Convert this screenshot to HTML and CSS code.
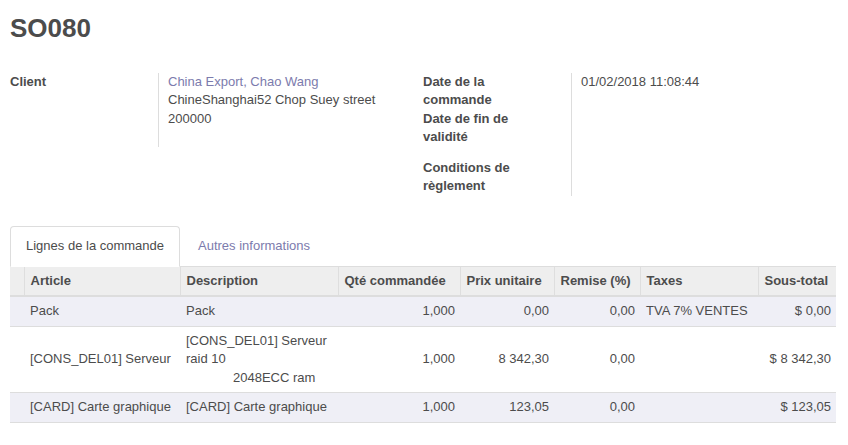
FILE: index.html
```html
<!DOCTYPE html>
<html lang="fr">
<head>
<meta charset="utf-8">
<title>SO080</title>
<link rel="stylesheet" href="styles.css">
</head>
<body>
<div class="sheet">
  <h1 class="title">SO080</h1>
  <div class="groups">
    <div class="group">
      <div class="row">
        <div class="label"><span>Client</span></div>
        <div class="value client">
          <a class="link" href="#">China Export, Chao Wang</a>
          <div>ChineShanghai52 Chop Suey street</div>
          <div>200000</div>
          <div>&nbsp;</div>
        </div>
      </div>
    </div>
    <div class="group">
      <div class="row">
        <div class="label"><span>Date de la commande</span></div>
        <div class="value">01/02/2018 11:08:44</div>
      </div>
      <div class="row">
        <div class="label"><span>Date de fin de validité</span></div>
        <div class="value"></div>
      </div>
      <div class="row spaced">
        <div class="label"><span>Conditions de règlement</span></div>
        <div class="value"></div>
      </div>
    </div>
  </div>

  <ul class="tabs">
    <li class="tab active"><a href="#">Lignes de la commande</a></li>
    <li class="tab"><a href="#">Autres informations</a></li>
  </ul>

  <table class="lines">
    <colgroup>
      <col class="c-handle"><col class="c-article"><col class="c-desc"><col class="c-qty"><col class="c-price"><col class="c-disc"><col class="c-tax"><col class="c-total">
    </colgroup>
    <thead>
      <tr>
        <th></th>
        <th>Article</th>
        <th>Description</th>
        <th>Qté commandée</th>
        <th>Prix unitaire</th>
        <th>Remise (%)</th>
        <th>Taxes</th>
        <th>Sous-total</th>
      </tr>
    </thead>
    <tbody>
      <tr class="odd">
        <td></td>
        <td>Pack</td>
        <td>Pack</td>
        <td class="num">1,000</td>
        <td class="num">0,00</td>
        <td class="num">0,00</td>
        <td>TVA 7% VENTES</td>
        <td class="num">$ 0,00</td>
      </tr>
      <tr>
        <td></td>
        <td>[CONS_DEL01] Serveur</td>
        <td class="pre">[CONS_DEL01] Serveur raid 10
             2048ECC ram</td>
        <td class="num">1,000</td>
        <td class="num">8 342,30</td>
        <td class="num">0,00</td>
        <td></td>
        <td class="num">$ 8 342,30</td>
      </tr>
      <tr class="odd">
        <td></td>
        <td>[CARD] Carte graphique</td>
        <td>[CARD] Carte graphique</td>
        <td class="num">1,000</td>
        <td class="num">123,05</td>
        <td class="num">0,00</td>
        <td></td>
        <td class="num">$ 123,05</td>
      </tr>
    </tbody>
  </table>
</div>
</body>
</html>
```

FILE: styles.css
```css
* { box-sizing: border-box; }

html, body {
  margin: 0;
  padding: 0;
  background: #fff;
}

body {
  font-family: "Liberation Sans", Arial, Helvetica, sans-serif;
  font-size: 13px;
  line-height: 1.42857;
  color: #4c4c4c;
}

.sheet {
  padding: 0 12px 0 10px;
}

.title {
  margin: 0;
  padding-top: 14px;
  font-size: 26px;
  line-height: 28.6px;
  font-weight: bold;
  color: #4c4c4c;
}

.groups {
  display: grid;
  grid-template-columns: 413px 413px;
  margin-top: 30px;
}

.row {
  display: grid;
  grid-template-columns: 149px 1fr;
}

.row.spaced > .label,
.row.spaced > .value {
  padding-top: 12px;
}

.label {
  border-right: 1px solid #ddd;
  font-weight: bold;
  padding-right: 30px;
}

.label span {
  display: block;
  max-width: 110px;
}

.value {
  padding-left: 9px;
}

.link {
  color: #7c7bad;
  text-decoration: none;
}

.client .link {
  display: block;
}

.tabs {
  list-style: none;
  margin: 30px 0 0;
  padding: 0;
  display: flex;
  border-bottom: 1px solid #ddd;
}

.tab {
  margin-right: 2px;
  margin-bottom: -1px;
}

.tab a {
  display: block;
  padding: 10px 15px;
  border: 1px solid transparent;
  border-radius: 4px 4px 0 0;
  color: #7c7bad;
  text-decoration: none;
}

.tab.active a {
  color: #4c4c4c;
  background: #fff;
  border-color: #ddd #ddd transparent;
}

.lines {
  width: 826px;
  border-collapse: collapse;
  table-layout: fixed;
}

.c-handle { width: 14px; }
.c-article { width: 156px; }
.c-desc { width: 158px; }
.c-qty { width: 122px; }
.c-price { width: 94px; }
.c-disc { width: 86px; }
.c-tax { width: 118px; }
.c-total { width: 78px; }

.lines th {
  background: #eeeeee;
  font-weight: bold;
  text-align: left;
  padding: 5px 5px 5px 6px;
  border-left: 1px solid #dedede;
  border-bottom: 2px solid #dddddd;
  white-space: nowrap;
  overflow: hidden;
}

.lines th:first-child {
  border-left: none;
}

.lines td {
  padding: 5px 5px 5px 6px;
  border-top: 1px solid #dddddd;
  vertical-align: middle;
  white-space: nowrap;
}

.lines tbody tr:first-child td {
  border-top: none;
}

.lines tbody tr:last-child td {
  border-bottom: 1px solid #dddddd;
}

.lines tr.odd td {
  background: #efeff6;
}

.lines td.num {
  text-align: right;
}

.lines td.pre {
  white-space: pre-wrap;
}
```
